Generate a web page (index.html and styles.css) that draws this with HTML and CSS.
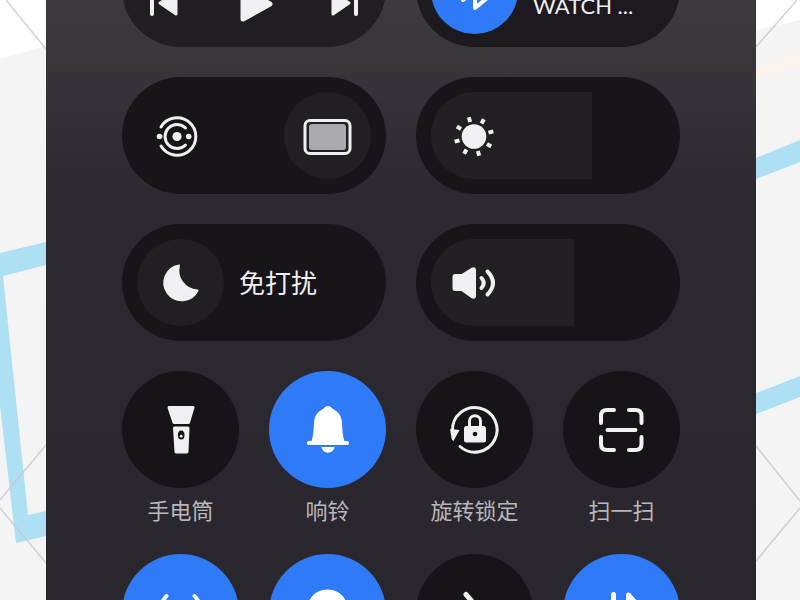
FILE: index.html
```
<!DOCTYPE html>
<html lang="zh-CN">
<head>
	<meta charset="utf-8">
	<meta name="viewport" content="width=device-width, initial-scale=1">
	<title>控制中心</title>
	<link rel="stylesheet" href="styles.css">
</head>
<body>
	<svg class="paper" viewBox="0 0 46 600" preserveAspectRatio="xMaxYMin slice" aria-hidden="true">
		<path class="white" d="M0 0H46V46L0 59Z"/>
		<path class="sky" d="M0 253L46 242V265L3 276L28 515L46 511V536L16 543L0 406Z"/>
		<path class="thread" d="M6 0L46 49M46 445L0 500M0 508L46 563"/>
	</svg>

	<main class="panel">
		<div class="grid">
			<section class="pill media">
				<button type="button" class="plain" aria-label="上一首">
					<svg class="icon" viewBox="0 0 49 49"><path class="line" d="M13 10V34"/><path class="solid" d="M21 23L37 13V34Z"/></svg>
				</button>
				<button type="button" class="plain" aria-label="播放">
					<svg class="icon" viewBox="0 0 49 49"><path class="solid soft" d="M13 9V39L40 24Z"/></svg>
				</button>
				<button type="button" class="plain" aria-label="下一首">
					<svg class="icon" viewBox="0 0 49 49"><path class="solid" d="M29 23L13 13V34Z"/><path class="line" d="M36 10V34"/></svg>
				</button>
			</section>

			<section class="pill device">
				<button type="button" class="round on" aria-label="蓝牙">
					<svg class="icon" viewBox="0 0 49 49"><path class="line" d="M13 34L36 15L25 6V42L36 33L13 15"/></svg>
				</button>
				<span class="device_name">WATCH ...</span>
			</section>

			<section class="pill">
				<button type="button" class="round plain" aria-label="共享">
					<svg class="icon" viewBox="0 0 49 49">
						<path class="line thin" d="M5 16A18.700 18.700 0 1 1 5 35"/>
						<path class="line thin" d="M29.500 17A12 12 0 1 0 29.500 34"/>
						<circle class="fill" cx="21" cy="25.500" r="4.600"/>
						<circle class="fill" cx="3.500" cy="25.500" r="2.800"/>
						<circle class="fill" cx="32.700" cy="25.500" r="2.800"/>
					</svg>
				</button>
				<button type="button" class="round push" aria-label="投屏">
					<svg class="icon" viewBox="0 0 49 49">
						<rect class="line thin" x="2" y="9.500" width="45" height="33" rx="5"/>
						<rect class="gray" x="6" y="13" width="37" height="26" rx="3"/>
					</svg>
				</button>
			</section>

			<section class="pill slider">
				<input type="range" id="bright" min="0" max="100" value="69" style="--value:69%">
				<label for="bright" aria-label="亮度">
					<svg class="icon" viewBox="0 0 49 49">
						<circle class="fill" cx="24" cy="25.500" r="12.300"/>
						<g transform="translate(24 25.500) rotate(-15)">
							<path class="line ray" d="M0-15V-20M0 15V20M-15 0H-20M15 0H20M10.600-10.600L14-14M10.600 10.600L14 14M-10.600 10.600L-14 14M-10.600-10.600L-14-14"/>
						</g>
					</svg>
				</label>
			</section>

			<section class="pill">
				<button type="button" class="round" id="quiet" aria-labelledby="quiet_name">
					<svg class="icon" viewBox="0 0 49 49"><path class="solid moon" d="M23 7.500A17.500 17.500 0 1 0 41.500 32.500A20 20 0 0 1 23 7.500Z"/></svg>
				</button>
				<label class="name" for="quiet" id="quiet_name">免打扰</label>
			</section>

			<section class="pill slider">
				<input type="range" id="volume" min="0" max="100" value="61" style="--value:61%">
				<label for="volume" aria-label="音量">
					<svg class="icon" viewBox="0 0 49 49">
						<path class="solid" d="M5 17.500H12L22.500 11Q24.500 10 24.500 12V38Q24.500 40 22.500 39L12 31.500H5Q4 31.500 4 30V19Q4 17.500 5 17.500Z"/>
						<path class="line" d="M31.500 20Q36 25 31.500 30M37.500 13.500Q48.500 25 37.500 36.500"/>
					</svg>
				</label>
			</section>

			<div class="item">
				<button type="button" class="toggle" id="torch" aria-labelledby="torch_name">
					<svg class="icon" viewBox="0 0 49 49">
						<path class="solid" d="M13 2.500H37L32.500 17.500H18Z"/>
						<path class="solid" d="M18.500 23H32L31 47H20Z"/>
						<ellipse class="hole" cx="25.200" cy="30" rx="3.300" ry="4.500"/>
						<circle class="fill" cx="25.200" cy="31.200" r="1.400"/>
					</svg>
				</button>
				<label for="torch" id="torch_name">手电筒</label>
			</div>

			<div class="item">
				<button type="button" class="toggle on" id="ring" aria-labelledby="ring_name">
					<svg class="icon" viewBox="0 0 49 49">
						<path class="fill" d="M25 1C27 1 28 2 30 4C36 7 38.500 11 39 18C39.500 25 39.500 31 41.500 36H44.500C46.500 36 46.500 40 44.500 40H5.500C3.500 40 3.500 36 5.500 36H8.500C10.500 31 10.500 25 11 18C11.500 11 14 7 20 4C22 2 23 1 25 1Z"/>
						<path class="fill" d="M18.500 42H31.500C30.500 49.500 19.500 49.500 18.500 42Z"/>
					</svg>
				</button>
				<label for="ring" id="ring_name">响铃</label>
			</div>

			<div class="item">
				<button type="button" class="toggle" id="lock" aria-labelledby="lock_name">
					<svg class="icon" viewBox="0 0 49 49">
						<path class="line thin" d="M10 41.500A22.300 22.300 0 1 0 2.500 26"/>
						<path class="fill" d="M0 24L9.500 25L3.500 36Q2 36 1.500 33Z"/>
						<rect class="fill" x="14" y="21" width="22" height="16.500" rx="2.500"/>
						<path class="line thin" d="M19.500 21V16C19.500 9 30.500 9 30.500 16V21"/>
						<circle class="hole" cx="25" cy="29" r="2.300"/>
					</svg>
				</button>
				<label for="lock" id="lock_name">旋转锁定</label>
			</div>

			<div class="item">
				<button type="button" class="toggle" id="scan" aria-labelledby="scan_name">
					<svg class="icon" viewBox="0 0 49 49">
						<path class="line" d="M4 18V11Q4 5 10 5H17M32 5H38.500Q44.500 5 44.500 11V18M44.500 32V39Q44.500 45 38.500 45H32M17 45H10Q4 45 4 39V32M10.500 25H38.500"/>
					</svg>
				</button>
				<label for="scan" id="scan_name">扫一扫</label>
			</div>

			<div class="item">
				<button type="button" class="toggle on" aria-label="热点">
					<svg class="icon" viewBox="0 0 49 49">
						<path class="line" d="M10.500 8Q-4 24 10.500 42M38.500 8Q53 24 38.500 42M17 15Q9 24 17 34M32 15Q40 24 32 34"/>
						<circle class="fill" cx="24.500" cy="24.500" r="4"/>
					</svg>
				</button>
			</div>

			<div class="item">
				<button type="button" class="toggle on" aria-label="位置">
					<svg class="icon" viewBox="0 0 49 49"><path class="fill" d="M24.500 1.500C36 1.500 44 9.500 44 20C44 32 24.500 48 24.500 48S5 32 5 20C5 9.500 13 1.500 24.500 1.500Z"/></svg>
				</button>
			</div>

			<div class="item">
				<button type="button" class="toggle" aria-label="飞行模式">
					<svg class="icon" viewBox="0 0 49 49"><path class="line wide" d="M16 6.500L31 24L16 42M4 24H44"/></svg>
				</button>
			</div>

			<div class="item">
				<button type="button" class="toggle on" aria-label="移动数据">
					<svg class="icon" viewBox="0 0 49 49"><path class="line wide" d="M16.500 6.500V42L6 32"/><path class="line wide" d="M31.500 42V7L41 18"/></svg>
				</button>
			</div>
		</div>
	</main>

	<svg class="paper" viewBox="0 0 44 600" preserveAspectRatio="xMinYMin slice" aria-hidden="true">
		<path class="white" d="M0 0H44V20L0 30Z"/>
		<path class="cream" d="M0 68L44 50V65L0 80Z"/>
		<path class="sky" d="M0 158L44 140V162L0 179ZM0 393L44 376V397L0 414Z"/>
		<path class="thread" d="M0 47L41 0M0 446L44 501M0 561L44 508"/>
	</svg>
</body>
</html>
```

FILE: styles.css
```
*{box-sizing:border-box;}
body,section,input{margin:0;padding:0;}
button{margin:0;padding:0;border:none;background:none;color:inherit;font:inherit;cursor:pointer;}
svg{display:block;}
body{
	display:grid;
	grid-template-columns:46px 1fr 44px;
	height:100vh;
	overflow:hidden;
	background:#f4f4f5;
	font-family:"Noto Sans CJK SC","Noto Sans",sans-serif;
	color:#f0eff2;
}

/* paper behind the phone */
.paper{width:100%;height:600px;}
.white{fill:#fff;}
.sky{fill:#ade0f3;}
.cream{fill:#faf4ea;}
.thread{fill:none;stroke:#c8c8c8;stroke-width:1.5;opacity:.8;}

.panel{
	overflow:hidden;
	padding:0 76px;
	background:linear-gradient(#3c393f 0,#38363b 60px,#2c2a30 190px,#29272d 100%);
}
/* the list is scrolled, its first row is cut by the top edge */
.grid{
	display:grid;
	grid-template-columns:repeat(4,1fr);
	gap:30px;
	margin-top:-70px;
}

.pill{
	grid-column:span 2;
	display:flex;
	align-items:center;
	height:117px;
	padding:0 15px;
	border-radius:59px;
	background:#17151a;
}
.media{align-items:flex-end;justify-content:space-between;padding:0 17px 18px;background:#201e23;}
.device{align-items:flex-end;padding-bottom:13px;background:#1c1a1f;}
.device_name{margin-left:15px;padding-bottom:15px;font:22px/27px Lato,"Noto Sans",sans-serif;}
.name{margin-left:15px;padding-bottom:2px;font-size:26px;line-height:36px;}

.round{
	display:flex;
	flex:none;
	align-items:center;
	justify-content:center;
	width:87px;
	height:87px;
	border-radius:50%;
	background:#211f24;
}
.push{margin-left:auto;}
.plain{background:none;}
.round.on,.toggle.on{background:#2f7af7;color:#fff;}

/* icon lies on the filled part of the slider */
.slider{display:grid;}
.slider input,.slider label{grid-area:1/1;}
.slider label{justify-self:start;margin-left:19px;pointer-events:none;}
.slider input{
	-webkit-appearance:none;
	appearance:none;
	width:100%;
	height:87px;
	border-radius:44px;
	background:linear-gradient(90deg,#222025 var(--value),transparent var(--value));
}
.slider input::-webkit-slider-thumb{-webkit-appearance:none;width:10px;height:87px;background:transparent;}

.item{display:flex;flex-direction:column;align-items:center;}
.item label{margin-top:7px;font-size:22px;line-height:29px;color:#b9b7bc;white-space:nowrap;}
.toggle{
	display:flex;
	align-items:center;
	justify-content:center;
	width:117px;
	height:117px;
	border-radius:50%;
	background:#161419;
}

.icon{width:49px;height:49px;overflow:visible;}
.fill{fill:currentColor;}
.solid{fill:currentColor;stroke:currentColor;stroke-width:3;stroke-linejoin:round;}
.soft{stroke-width:5;}
.moon{stroke-width:2;}
.line{fill:none;stroke:currentColor;stroke-width:4;stroke-linecap:round;stroke-linejoin:round;}
.thin{stroke-width:3;}
.ray{stroke-linecap:butt;}
.wide{stroke-width:5;}
.gray{fill:#aaa9ac;}
.hole{fill:#161419;}
```
